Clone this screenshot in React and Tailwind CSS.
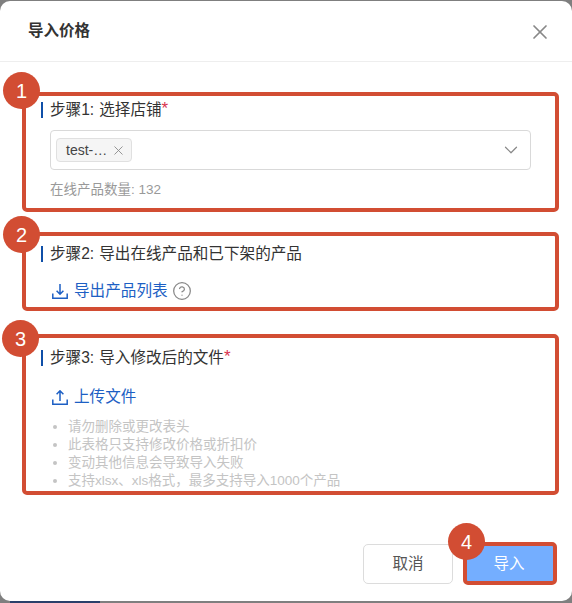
import React from 'react';
import { X, ChevronDown, CircleHelp } from 'lucide-react';

function Badge({ n, className }) {
  return (
    <div className={`absolute z-10 flex h-[37px] w-[37px] items-center justify-center rounded-full bg-[#d24d33] text-[20px] text-white ${className}`}>
      {n}
    </div>
  );
}

function StepTitle({ prefix, children, required }) {
  return (
    <div className="-ml-[9px] flex h-[16px] items-center border-l-2 border-[#0f4fa8] pl-[7px] text-[15.6px] leading-none text-[#333]">
      <span className="mr-[5px]">{prefix}</span>
      {children}
      {required && <span className="-mt-[3px] text-[17px] text-[#d9324e]">*</span>}
    </div>
  );
}

function DownloadIcon() {
  return (
    <svg width="16" height="15" viewBox="0 0 16 15" fill="none" stroke="#1d5fc4" strokeWidth="1.5">
      <path d="M8 0v10M4.6 6.8L8 10.2l3.4-3.4M.8 9.5v4.7h14.4V9.5" />
    </svg>
  );
}

function UploadIcon() {
  return (
    <svg width="16" height="15" viewBox="0 0 16 15" fill="none" stroke="#1d5fc4" strokeWidth="1.5">
      <path d="M8 11V1M4.6 4.2L8 .8l3.4 3.4M.8 9.5v4.7h14.4V9.5" />
    </svg>
  );
}

export default function App() {
  return (
    <div className="h-[603px] w-[572px] overflow-hidden bg-[#7f7f7f] pt-px font-['Liberation_Sans','Noto_Sans_CJK_SC',sans-serif]">
      <div className="relative flex h-[600px] flex-col rounded-[10px] bg-white">
        {/* Header */}
        <div className="flex h-[61px] shrink-0 items-center justify-between border-b border-[#eeeeee] pl-[28px] pr-[20px]">
          <span className="text-[15.5px] font-bold text-[#333]">导入价格</span>
          <X size={24} strokeWidth={1.7} className="mt-[2px] text-[#888]" />
        </div>

        {/* Steps */}
        <div className="flex flex-col pl-[22px] pr-[13px] pt-[30px]">
          <div className="relative h-[120px] rounded-[5px] border-4 border-[#d24d33] pl-[24px] pr-[24px] pt-[6px]">
            <Badge n="1" className="-left-[23px] -top-[24px]" />
            <StepTitle prefix="步骤1:" required>选择店铺</StepTitle>
            <div className="mt-[12px] flex h-[40px] items-center justify-between rounded-[4px] border border-[#d9d9d9] pl-[5px] pr-[8px]">
              <div className="flex h-[24px] w-[76px] items-center rounded-[4px] border border-[#e0e0e0] bg-[#f5f5f5] pl-[9px] text-[14px] text-[#444]">
                test-…
                <X size={15} strokeWidth={1.4} className="ml-[4px] text-[#888]" />
              </div>
              <ChevronDown size={22} strokeWidth={1.3} className="text-[#888]" />
            </div>
            <div className="mt-[12px] text-[13.5px] leading-[16px] text-[#999]">在线产品数量: 132</div>
          </div>

          <div className="relative mt-[20px] h-[79px] rounded-[5px] border-4 border-[#d24d33] pl-[26px] pt-[10px]">
            <Badge n="2" className="-left-[23px] -top-[20px]" />
            <div className="-ml-[2px]">
              <StepTitle prefix="步骤2:">导出在线产品和已下架的产品</StepTitle>
            </div>
            <div className="mt-[19px] flex items-center gap-[6px] text-[15.6px] leading-[20px] text-[#1d5fc4]">
              <DownloadIcon />
              导出产品列表
              <CircleHelp size={20} strokeWidth={1.5} className="-ml-[2px] text-[#888]" />
            </div>
          </div>

          <div className="relative mt-[23px] h-[161px] rounded-[5px] border-4 border-[#d24d33] pl-[24px] pt-[12px]">
            <Badge n="3" className="-left-[24px] -top-[18px]" />
            <StepTitle prefix="步骤3:" required>导入修改后的文件</StepTitle>
            <div className="ml-[2px] mt-[21px] flex items-center gap-[6px] text-[15.6px] leading-[20px] text-[#1d5fc4]">
              <UploadIcon />
              上传文件
            </div>
            <ul className="mt-[11px] text-[13.5px] leading-[18px] text-[#c4c4c4]">
              {['请勿删除或更改表头', '此表格只支持修改价格或折扣价', '变动其他信息会导致导入失败', '支持xlsx、xls格式，最多支持导入1000个产品'].map((t) => (
                <li key={t} className="flex items-center">
                  <span className="ml-[3px] mr-[11px] h-[4px] w-[4px] rounded-full bg-[#c4c4c4]" />
                  {t}
                </li>
              ))}
            </ul>
          </div>
        </div>

        {/* Footer */}
        <div className="mt-[49px] flex justify-end pr-[15px]">
          <button className="h-[40px] w-[90px] rounded-[5px] border border-[#dcdcdc] bg-white text-[15.5px] text-[#555]">取消</button>
          <div className="relative ml-[10px]">
            <Badge n="4" className="-left-[15px] -top-[21px]" />
            <button className="h-[43px] w-[94px] -translate-y-[2px] rounded-[5px] border-4 border-[#d24d33] bg-[#74aeff] pr-[2px] text-[15.5px] text-white">导入</button>
          </div>
        </div>
      </div>
      <div className="ml-[10px] h-[2px] w-[90px] bg-[#2a3f6a]" />
    </div>
  );
}
